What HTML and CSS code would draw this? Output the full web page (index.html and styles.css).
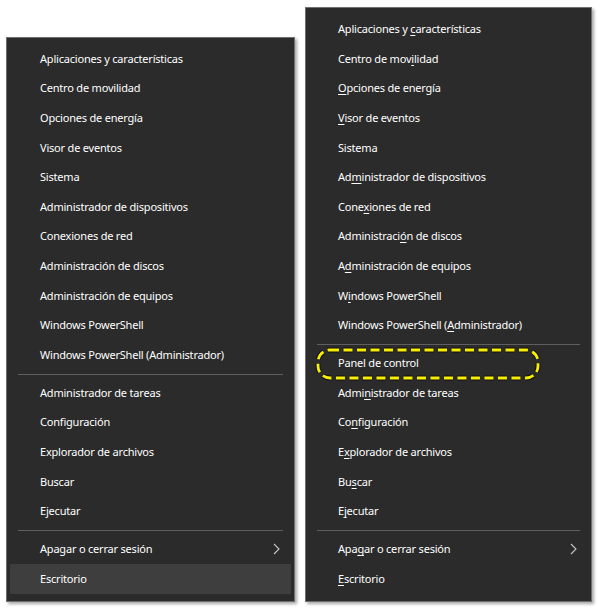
FILE: index.html
```html
<!DOCTYPE html>
<html lang="es">
<head>
<meta charset="utf-8">
<link rel="stylesheet" href="styles.css">
</head>
<body>
<div class="stage">
  <div class="menu menu-left">
    <div class="item"><span>Aplicaciones y características</span></div>
    <div class="item"><span>Centro de movilidad</span></div>
    <div class="item"><span>Opciones de energía</span></div>
    <div class="item"><span>Visor de eventos</span></div>
    <div class="item"><span>Sistema</span></div>
    <div class="item"><span>Administrador de dispositivos</span></div>
    <div class="item"><span>Conexiones de red</span></div>
    <div class="item"><span>Administración de discos</span></div>
    <div class="item"><span>Administración de equipos</span></div>
    <div class="item"><span>Windows PowerShell</span></div>
    <div class="item"><span>Windows PowerShell (Administrador)</span></div>
    <div class="sep"></div>
    <div class="item"><span>Administrador de tareas</span></div>
    <div class="item"><span>Configuración</span></div>
    <div class="item"><span>Explorador de archivos</span></div>
    <div class="item"><span>Buscar</span></div>
    <div class="item"><span>Ejecutar</span></div>
    <div class="sep"></div>
    <div class="item"><span>Apagar o cerrar sesión</span>
      <svg class="chev" width="7" height="12" viewBox="0 0 7 12"><polyline points="1,1 6,6 1,11" fill="none" stroke="#c8c8c8" stroke-width="1.1"/></svg>
    </div>
    <div class="item active"><span>Escritorio</span></div>
  </div>

  <div class="menu menu-right">
    <div class="item"><span>Aplicaciones y <u>c</u>aracterísticas</span></div>
    <div class="item"><span>Centro de mov<u>i</u>lidad</span></div>
    <div class="item"><span><u>O</u>pciones de energía</span></div>
    <div class="item"><span><u>V</u>isor de eventos</span></div>
    <div class="item"><span>Sistema</span></div>
    <div class="item"><span>Ad<u>m</u>inistrador de dispositivos</span></div>
    <div class="item"><span>Cone<u>x</u>iones de red</span></div>
    <div class="item"><span>Administraci<u>ó</u>n de discos</span></div>
    <div class="item"><span>A<u>d</u>ministración de equipos</span></div>
    <div class="item"><span>W<u>i</u>ndows PowerShell</span></div>
    <div class="item"><span>Windows PowerShell (<u>A</u>dministrador)</span></div>
    <div class="sep"></div>
    <div class="item"><span>Panel de control</span>
      <svg class="mark" width="226" height="34" viewBox="0 0 226 34">
        <rect x="3" y="3" width="220" height="28" rx="12" ry="12" fill="none" stroke="#111" stroke-width="5" stroke-dasharray="9 4.5"/>
        <rect x="3" y="3" width="220" height="28" rx="12" ry="12" fill="none" stroke="#f7ee00" stroke-width="2.8" stroke-dasharray="9 4.5"/>
      </svg>
    </div>
    <div class="item"><span>Admi<u>n</u>istrador de tareas</span></div>
    <div class="item"><span>Co<u>n</u>figuración</span></div>
    <div class="item"><span>E<u>x</u>plorador de archivos</span></div>
    <div class="item"><span>Bu<u>s</u>car</span></div>
    <div class="item"><span>E<u>j</u>ecutar</span></div>
    <div class="sep"></div>
    <div class="item"><span>Apa<u>g</u>ar o cerrar sesión</span>
      <svg class="chev" width="7" height="12" viewBox="0 0 7 12"><polyline points="1,1 6,6 1,11" fill="none" stroke="#c8c8c8" stroke-width="1.1"/></svg>
    </div>
    <div class="item"><span><u>E</u>scritorio</span></div>
  </div>
</div>
</body>
</html>
```

FILE: styles.css
```css
html, body {
  margin: 0;
  padding: 0;
  background: #ffffff;
}

.stage {
  display: flex;
  align-items: flex-end;
  gap: 10px;
  height: 610px;
  padding: 0 0 8px 6px;
  box-sizing: border-box;
}

.menu {
  box-sizing: border-box;
  background: #2b2b2b;
  border: 1px solid #6f6f6f;
  box-shadow: 2px 2px 3px rgba(0, 0, 0, 0.35);
  padding: 7px 3px 7px 3px;
  display: flex;
  flex-direction: column;
  font-family: "Noto Sans", "Open Sans", sans-serif;
  font-size: 11px;
  letter-spacing: -0.2px;
  color: #ffffff;
}

.menu-left {
  width: 289px;
}

.menu-right {
  width: 287px;
}

.item {
  position: relative;
  box-sizing: border-box;
  height: 29.6px;
  display: flex;
  align-items: center;
  justify-content: space-between;
  padding: 0 11px 2px 30px;
  white-space: nowrap;
}

.menu-right .item {
  padding-left: 29px;
}

.item u {
  text-decoration-thickness: 1px;
  text-underline-offset: 2px;
}

.item.active {
  background: #3e3e3e;
}

.sep {
  height: 8.4px;
  display: flex;
  align-items: center;
  padding: 0 8px;
}

.sep::before {
  content: "";
  flex: 1;
  height: 1px;
  background: #5f5f5f;
}

.chev {
  display: block;
}

.mark {
  position: absolute;
  left: 6px;
  top: -2px;
}
```
